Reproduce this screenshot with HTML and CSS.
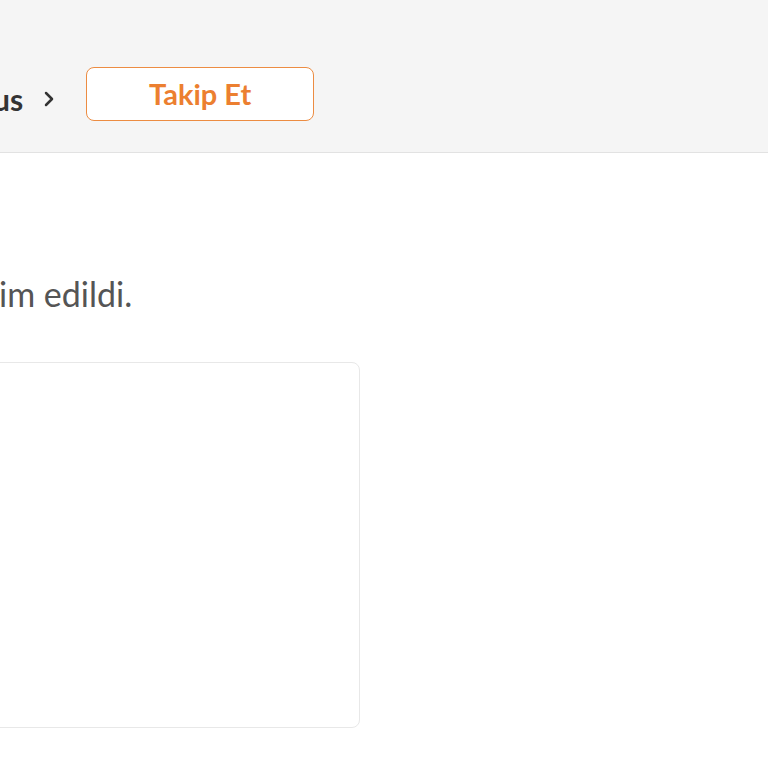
FILE: index.html
```html
<!DOCTYPE html>
<html lang="tr">
<head>
<meta charset="utf-8">
<link rel="stylesheet" href="styles.css">
</head>
<body>
<header class="topbar">
  <nav class="crumbs">
    <span class="crumb">us</span>
    <svg class="chev" width="12" height="18" viewBox="0 0 12 18"><path d="M3 3 L9 9 L3 15" fill="none" stroke="#333" stroke-width="2.5" stroke-linecap="round" stroke-linejoin="round"/></svg>
  </nav>
  <button class="follow">Takip Et</button>
</header>
<main class="content">
  <p class="note">im edildi.</p>
  <div class="card"></div>
</main>
</body>
</html>
```
FILE: styles.css
```css
html, body {
  margin: 0;
  padding: 0;
  background: #ffffff;
  font-family: Lato, "Open Sans", sans-serif;
  overflow: hidden;
}
.topbar {
  box-sizing: border-box;
  height: 153px;
  background: #f5f5f5;
  border-bottom: 1px solid #e2e2e2;
  display: flex;
  align-items: center;
  padding-top: 52px;
  padding-bottom: 17px;
}
.crumbs {
  display: flex;
  align-items: center;
  gap: 20px;
  margin-left: -7px;
  margin-top: 10px;
}
.crumb {
  font-size: 30px;
  font-weight: 700;
  color: #333333;
  line-height: 1;
}
.chev {
  display: block;
}
.follow {
  margin-left: 31px;
  box-sizing: border-box;
  width: 228px;
  height: 54px;
  border: 1.5px solid #ec8c42;
  border-radius: 8px;
  background: #ffffff;
  color: #ec7f30;
  font-family: Lato, "Open Sans", sans-serif;
  font-size: 29px;
  font-weight: 700;
  padding: 0;
}
.content {
  padding-top: 121px;
}
.note {
  margin: 0 0 0 -1px;
  font-size: 34px;
  line-height: 40px;
  color: #555555;
}
.card {
  margin-top: 48px;
  margin-left: -20px;
  width: 380px;
  height: 366px;
  box-sizing: border-box;
  border: 1.5px solid #e8e8e8;
  border-radius: 8px;
  background: #ffffff;
}
```
